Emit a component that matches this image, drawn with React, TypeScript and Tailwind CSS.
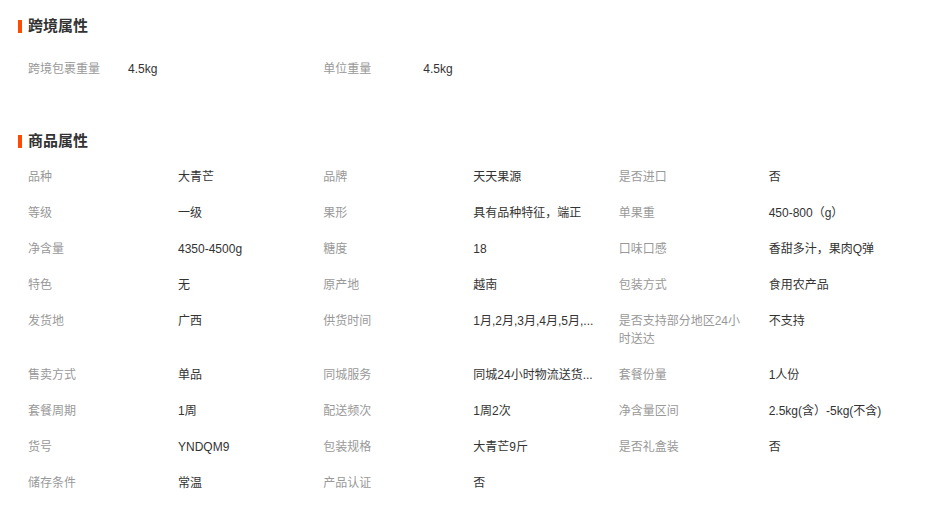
import React from "react";

type Attr = { label: string; value: string };

const crossBorder: Attr[] = [
  { label: "跨境包裹重量", value: "4.5kg" },
  { label: "单位重量", value: "4.5kg" },
];

// long values are shortened at the source, as the page shows them
const productAttrs: Attr[] = [
  { label: "品种", value: "大青芒" },
  { label: "品牌", value: "天天果源" },
  { label: "是否进口", value: "否" },
  { label: "等级", value: "一级" },
  { label: "果形", value: "具有品种特征，端正" },
  { label: "单果重", value: "450-800（g）" },
  { label: "净含量", value: "4350-4500g" },
  { label: "糖度", value: "18" },
  { label: "口味口感", value: "香甜多汁，果肉Q弹" },
  { label: "特色", value: "无" },
  { label: "原产地", value: "越南" },
  { label: "包装方式", value: "食用农产品" },
  { label: "发货地", value: "广西" },
  { label: "供货时间", value: "1月,2月,3月,4月,5月,..." },
  { label: "是否支持部分地区24小时送达", value: "不支持" },
  { label: "售卖方式", value: "单品" },
  { label: "同城服务", value: "同城24小时物流送货..." },
  { label: "套餐份量", value: "1人份" },
  { label: "套餐周期", value: "1周" },
  { label: "配送频次", value: "1周2次" },
  { label: "净含量区间", value: "2.5kg(含）-5kg(不含)" },
  { label: "货号", value: "YNDQM9" },
  { label: "包装规格", value: "大青芒9斤" },
  { label: "是否礼盒装", value: "否" },
  { label: "储存条件", value: "常温" },
  { label: "产品认证", value: "否" },
];

function SectionTitle({ children }: { children: React.ReactNode }) {
  return (
    <div className="flex h-5 items-center pl-[18px]">
      <span className="h-[13px] w-[4px] bg-[#ff4a00]" />
      <h2 className="ml-[6px] text-[15px] leading-5 font-bold text-[#333]">{children}</h2>
    </div>
  );
}

export default function App() {
  return (
    <div
      className="min-h-[505px] bg-white pt-4 text-[12px] leading-[18px]"
      style={{ fontFamily: '"Liberation Sans", Arial, "Noto Sans CJK SC", sans-serif' }}
    >
      <SectionTitle>跨境属性</SectionTitle>
      <div className="mt-[15px] grid w-[914px] grid-cols-3 pl-[28px]">
        {crossBorder.map((a) => (
          <div key={a.label} className="flex py-[9px]">
            <span className="w-[100px] shrink-0 pr-4 text-[#999]">{a.label}</span>
            <span className="min-w-0 flex-1 pr-5 text-[#333]">{a.value}</span>
          </div>
        ))}
      </div>

      <div className="mt-[44px]">
        <SectionTitle>商品属性</SectionTitle>
      </div>
      <div className="mt-[8px] grid w-[914px] grid-cols-3 pl-[28px]">
        {productAttrs.map((a) => (
          <div key={a.label} className="flex py-[9px]">
            <span className="w-[150px] shrink-0 pr-[28px] text-[#999]">{a.label}</span>
            <span className="min-w-0 flex-1 pr-[8px] whitespace-nowrap text-[#333]">
              {a.value}
            </span>
          </div>
        ))}
      </div>
    </div>
  );
}
